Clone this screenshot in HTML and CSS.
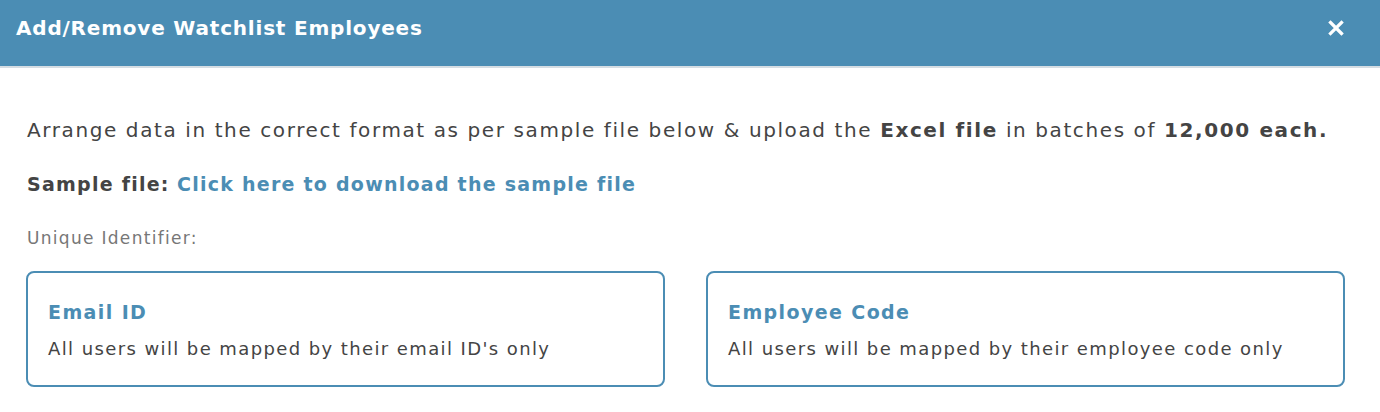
FILE: index.html
```html
<!DOCTYPE html>
<html lang="en">
<head>
    <meta charset="UTF-8">
    <meta name="viewport" content="width=device-width, initial-scale=1.0">
    <title>Add/Remove Watchlist Employees</title>
    <link rel="stylesheet" href="styles.css">
</head>
<body>
    <div class="modal">
        <div class="modal-header">
            <h2>Add/Remove Watchlist Employees</h2>
            <button class="close-button" aria-label="Close">
                <svg width="16" height="16" viewBox="0 0 16 16">
                    <path d="M2.5 2.5 L13.5 13.5 M13.5 2.5 L2.5 13.5" stroke="white" stroke-width="3.2" stroke-linecap="square"/>
                </svg>
            </button>
        </div>
        <div class="modal-body">
            <p class="intro">Arrange data in the correct format as per sample file below &amp; upload the <b>Excel file</b> in batches of <b>12,000 each.</b></p>
            <p class="sample"><b>Sample file:</b> <a href="#">Click here to download the sample file</a></p>
            <p class="label">Unique Identifier:</p>
            <div class="options">
                <div class="option-card">
                    <h3>Email ID</h3>
                    <p>All users will be mapped by their email ID's only</p>
                </div>
                <div class="option-card">
                    <h3>Employee Code</h3>
                    <p>All users will be mapped by their employee code only</p>
                </div>
            </div>
        </div>
    </div>
</body>
</html>
```

FILE: styles.css
```css
body {
    margin: 0;
    font-family: 'DejaVu Sans', sans-serif;
    color: #444;
    background: white;
    letter-spacing: 1.4px;
}
.modal-header {
    display: flex;
    justify-content: space-between;
    align-items: center;
    height: 68px;
    box-sizing: border-box;
    padding: 0 36px 10px 16px;
    background-color: #4b8db4;
    border-bottom: 2px solid #d5dde3;
}
.modal-header h2 {
    margin: 0;
    font-size: 20px;
    font-weight: 700;
    color: white;
    letter-spacing: 0.8px;
}
.close-button {
    border: none;
    background: none;
    padding: 0;
    display: flex;
    cursor: pointer;
}
.modal-body {
    padding: 48px 35px 0 27px;
}
.intro {
    margin: 0;
    font-size: 20px;
    line-height: 28px;
    letter-spacing: 1.6px;
}
.sample {
    margin: 26px 0 0;
    font-size: 19px;
    line-height: 28px;
    letter-spacing: 1.25px;
}
.sample a {
    color: #4b8db4;
    font-weight: 700;
    text-decoration: none;
}
.label {
    margin: 30px 0 0;
    font-size: 17px;
    line-height: 20px;
    color: #777;
    letter-spacing: 1.3px;
}
.options {
    display: grid;
    grid-template-columns: 1fr 1fr;
    gap: 41px;
    margin-top: 23px;
    margin-left: -1px;
}
.option-card {
    border: 2px solid #4b8db4;
    border-radius: 8px;
    padding: 26px 20px 0;
    height: 116px;
    box-sizing: border-box;
}
.option-card h3 {
    margin: 0;
    font-size: 19px;
    line-height: 26px;
    color: #4b8db4;
}
.option-card p {
    margin: 12px 0 0;
    font-size: 18px;
    line-height: 24px;
}
```
